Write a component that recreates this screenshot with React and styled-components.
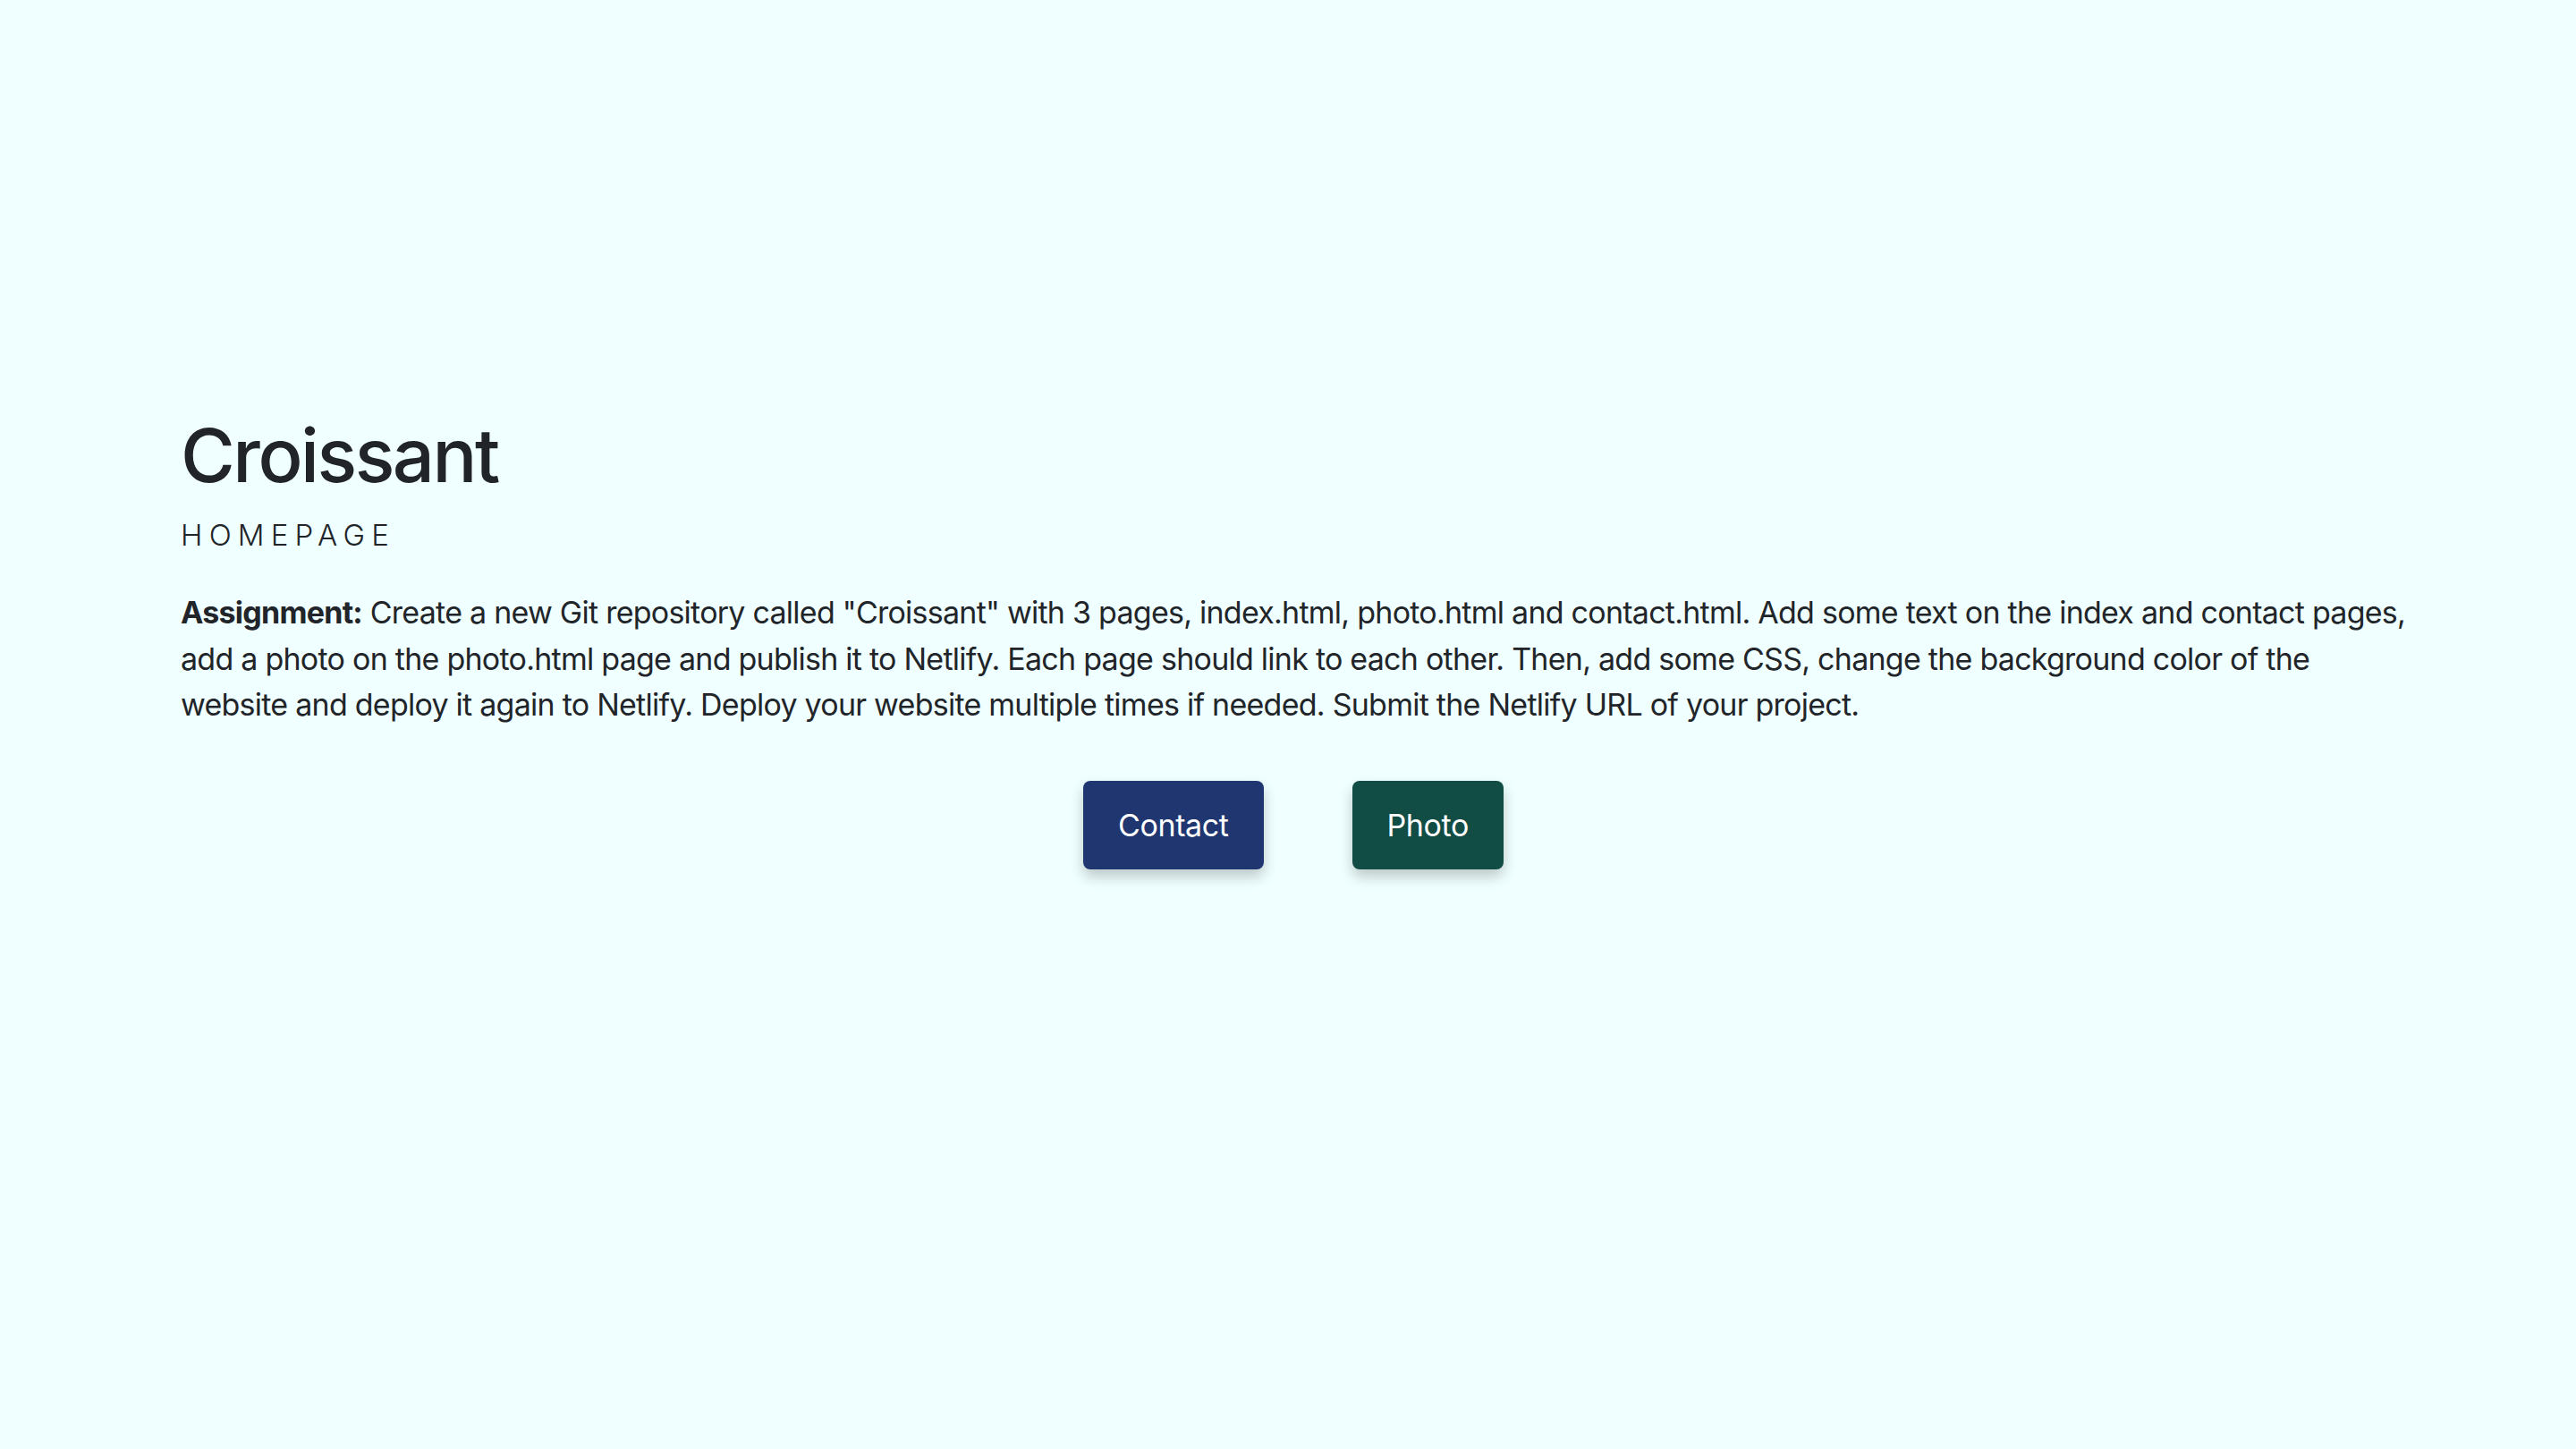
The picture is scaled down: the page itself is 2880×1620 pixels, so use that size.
import styled, { createGlobalStyle } from 'styled-components';

const GlobalStyle = createGlobalStyle`
  html, body {
    margin: 0;
    padding: 0;
    background-color: #f0ffff;
  }
  body {
    font-family: Inter, "Noto Sans", "Liberation Sans", sans-serif;
    color: #212529;
  }
`;

const Page = styled.main`
  min-height: 100vh;
  box-sizing: border-box;
  padding: 460px 190px 0 202px;
`;

const Title = styled.h1`
  margin: 0;
  font-size: 83px;
  font-weight: 500;
  line-height: 1.2;
  letter-spacing: -2.5px;
`;

const Subtitle = styled.h2`
  margin: 19px 0 0;
  font-size: 33px;
  font-weight: 300;
  letter-spacing: 7.2px;
  text-transform: uppercase;
  line-height: 1.2;
`;

const Text = styled.p`
  margin: 41px 0 0;
  font-size: 34px;
  line-height: 1.51;
  letter-spacing: -0.75px;
`;

const ButtonRow = styled.div`
  display: flex;
  justify-content: center;
  gap: 99px;
  margin-top: 60px;
`;

const LinkButton = styled.a`
  display: inline-flex;
  align-items: center;
  justify-content: center;
  height: 99px;
  padding: 0 39px;
  box-sizing: border-box;
  border-radius: 8px;
  background-color: ${props => props.color};
  color: #ffffff;
  font-size: 34px;
  letter-spacing: -0.4px;
  text-decoration: none;
  box-shadow: 0 8px 16px rgba(0, 0, 0, 0.22);
  cursor: pointer;
`;

export default function App() {
  return (
    <>
      <GlobalStyle />
      <Page>
        <Title>Croissant</Title>
        <Subtitle>Homepage</Subtitle>
        <Text>
          <strong>Assignment:</strong> Create a new Git repository called "Croissant" with 3 pages,
          index.html, photo.html and contact.html. Add some text on the index and contact pages, add a
          photo on the photo.html page and publish it to Netlify. Each page should link to each other.
          Then, add some CSS, change the background color of the website and deploy it again to
          Netlify. Deploy your website multiple times if needed. Submit the Netlify URL of your
          project.
        </Text>
        <ButtonRow>
          <LinkButton href="#contact" color="#1f3670">Contact</LinkButton>
          <LinkButton href="#photo" color="#114c45">Photo</LinkButton>
        </ButtonRow>
      </Page>
    </>
  );
}
